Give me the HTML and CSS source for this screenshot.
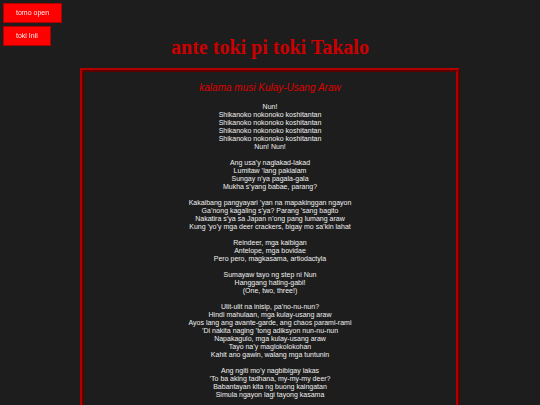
FILE: index.html
```html
<!DOCTYPE html>
<html lang="tl">
<head>
<meta charset="utf-8">
<title>ante toki pi toki Takalo</title>
<link rel="stylesheet" href="styles.css">
</head>
<body>
<div class="langs">
  <button class="lang-btn">tomo open</button>
  <button class="lang-btn">toki Inli</button>
</div>
<h1 class="title">ante toki pi toki Takalo</h1>
<main class="song">
  <h2 class="song-title">kalama musi Kulay-Usang Araw</h2>
  <p class="stanza">Nun!<br>Shikanoko nokonoko koshitantan<br>Shikanoko nokonoko koshitantan<br>Shikanoko nokonoko koshitantan<br>Shikanoko nokonoko koshitantan<br>Nun! Nun!</p>
  <p class="stanza">Ang usa’y naglakad-lakad<br>Lumitaw ’lang pakialam<br>Sungay n’ya pagala-gala<br>Mukha s’yang babae, parang?</p>
  <p class="stanza">Kakaibang pangyayari ’yan na mapakinggan ngayon<br>Ga’nong kagaling s’ya? Parang ’sang bagito<br>Nakatira s’ya sa Japan n’ong pang lumang araw<br>Kung ’yo’y mga deer crackers, bigay mo sa’kin lahat</p>
  <p class="stanza">Reindeer, mga kaibigan<br>Antelope, mga bovidae<br>Pero pero, magkasama, artiodactyla</p>
  <p class="stanza">Sumayaw tayo ng step ni Nun<br>Hanggang hating-gabi!<br>(One, two, three!)</p>
  <p class="stanza">Ulit-ulit na inisip, pa’no-nu-nun?<br>Hindi mahulaan, mga kulay-usang araw<br>Ayos lang ang avante-garde, ang chaos parami-rami<br>’Di nakita naging ’tong adiksyon nun-nu-nun<br>Napakagulo, mga kulay-usang araw<br>Tayo na’y maglokolokohan<br>Kahit ano gawin, walang mga tuntunin</p>
  <p class="stanza">Ang ngiti mo’y nagbibigay lakas<br>’To ba aking tadhana, my-my-my deer?<br>Babantayan kita ng buong kaingatan<br>Simula ngayon lagi tayong kasama</p>
</main>
</body>
</html>
```
FILE: styles.css
```css
html, body {
  margin: 0;
  padding: 0;
  background: #1d1d1d;
}

body {
  font-family: "Liberation Sans", Arial, sans-serif;
}

.langs {
  position: fixed;
  top: 3px;
  left: 3px;
  display: flex;
  flex-direction: column;
  align-items: flex-start;
  gap: 3px;
}

.lang-btn {
  margin: 0;
  padding: 5px 12px;
  border: 1px solid #b00000;
  background: #ff0000;
  color: #ffecec;
  font-family: "Liberation Sans", Arial, sans-serif;
  font-size: 7px;
  line-height: 8px;
}

.title {
  margin: 0;
  padding-top: 36px;
  font-family: "Liberation Serif", "Times New Roman", serif;
  font-weight: bold;
  font-size: 20px;
  line-height: 22px;
  color: #cc0000;
  text-align: center;
}

.song {
  box-sizing: border-box;
  width: 380px;
  margin: 10px auto 0;
  padding: 10px 10px 30px;
  border: 4px ridge #b00000;
  text-align: center;
}

.song-title {
  margin: 0 0 9px;
  font-family: "Liberation Sans", Arial, sans-serif;
  font-style: italic;
  font-weight: normal;
  font-size: 10px;
  line-height: 12px;
  color: #dd0000;
}

.stanza {
  margin: 0 0 8px;
  font-size: 7px;
  line-height: 8px;
  color: #f0f0f0;
}
```
